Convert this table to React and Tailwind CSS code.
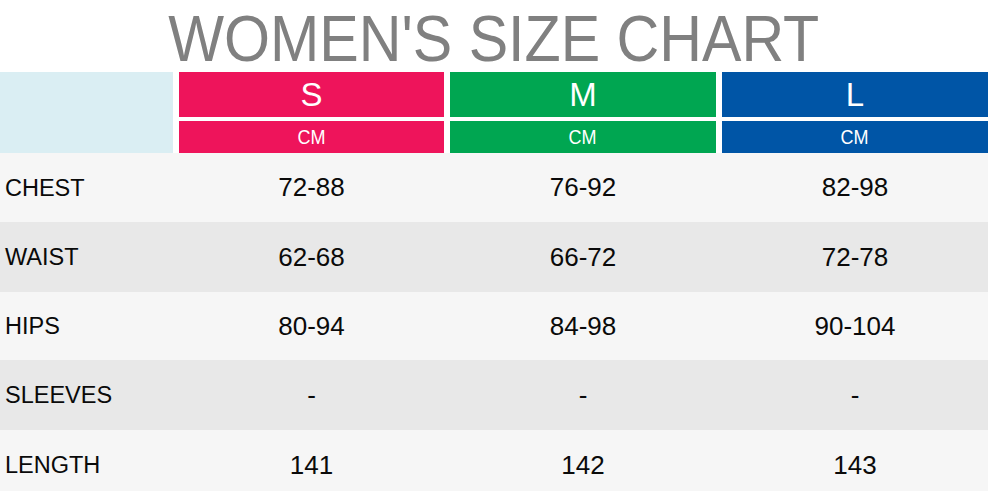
import React from 'react';

const sizes = [
    { label: 'S', bg: 'bg-[#ee145b]' },
    { label: 'M', bg: 'bg-[#00a651]' },
    { label: 'L', bg: 'bg-[#0055a6]' },
];

// medidas em cm
const rows = [
    { name: 'CHEST', values: ['72-88', '76-92', '82-98'], bg: 'bg-[#f6f6f6]', h: 'h-[69px]' },
    { name: 'WAIST', values: ['62-68', '66-72', '72-78'], bg: 'bg-[#e8e8e8]', h: 'h-[70px]' },
    { name: 'HIPS', values: ['80-94', '84-98', '90-104'], bg: 'bg-[#f6f6f6]', h: 'h-[68px]' },
    { name: 'SLEEVES', values: ['-', '-', '-'], bg: 'bg-[#e8e8e8]', h: 'h-[70px]' },
    { name: 'LENGTH', values: ['141', '142', '143'], bg: 'bg-[#f6f6f6]', h: 'h-[70px]' },
];

const cols = 'grid grid-cols-[173px_265px_266px_266px] gap-x-[6px]';

export default function App() {
    return (
        <div className="w-[988px] h-[491px] overflow-hidden bg-white font-['Liberation_Sans',Arial,sans-serif]">
            {/* Título */}
            <div className="h-[72px] pt-[3px] text-center leading-[72px]">
                <span className="inline-block scale-x-[0.91] text-[65px] text-[#808080] whitespace-nowrap">
                    WOMEN'S SIZE CHART
                </span>
            </div>

            {/* Cabeçalho */}
            <div className={`${cols} grid-rows-[45px_32px] gap-y-[4px]`}>
                <div className="row-span-2 bg-[#daeef3]" />
                {sizes.map((s) => (
                    <div key={s.label} className={`${s.bg} flex items-center justify-center text-white text-[33px] leading-none`}>
                        {s.label}
                    </div>
                ))}
                {sizes.map((s) => (
                    <div key={s.label + 'cm'} className={`${s.bg} flex items-center justify-center text-white text-[20px] leading-none`}>
                        <span className="inline-block scale-x-90">CM</span>
                    </div>
                ))}
            </div>

            {/* Linhas de medidas */}
            {rows.map((r) => (
                <div key={r.name} className={`${cols} ${r.bg} ${r.h} items-center text-[#0a0a0a]`}>
                    <div className="pl-[5px] pt-[2px] text-[23.5px]">{r.name}</div>
                    {r.values.map((v, i) => (
                        <div key={i} className="text-center text-[26px]">{v}</div>
                    ))}
                </div>
            ))}
        </div>
    );
}
